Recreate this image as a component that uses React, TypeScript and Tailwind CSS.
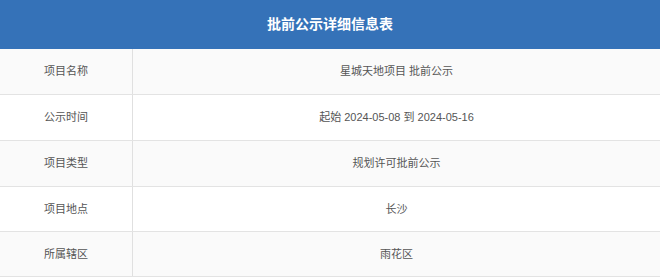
import React from "react";

const rows = [
  { label: "项目名称", value: "星城天地项目 批前公示", h: "h-[46px]", bg: "bg-[#fafafa]" },
  { label: "公示时间", value: "起始 2024-05-08 到 2024-05-16", h: "h-[46px]", bg: "bg-white" },
  { label: "项目类型", value: "规划许可批前公示", h: "h-[46px]", bg: "bg-[#fafafa]" },
  { label: "项目地点", value: "长沙", h: "h-[45px]", bg: "bg-white" },
  { label: "所属辖区", value: "雨花区", h: "h-[45px]", bg: "bg-[#fafafa]" },
];

export default function App() {
  return (
    <div className="w-[660px] h-[277px] bg-white font-['Liberation_Sans','Noto_Sans_CJK_SC',sans-serif] overflow-hidden">
      <div className="h-[49px] bg-[#3572b8] flex items-center justify-center">
        <h1 className="text-[14px] font-bold text-white">批前公示详细信息表</h1>
      </div>

      {rows.map((row, idx) => (
        <div key={idx} className={`flex border-b border-[#e3e3e3] ${row.h} ${row.bg}`}>
          <div className="w-[133px] shrink-0 border-r border-[#e0e0e0] flex items-center justify-center text-[11px] text-[#555]">
            {row.label}
          </div>
          <div className="flex-1 flex items-center justify-center text-[11px] text-[#555]">
            {row.value}
          </div>
        </div>
      ))}
    </div>
  );
}
